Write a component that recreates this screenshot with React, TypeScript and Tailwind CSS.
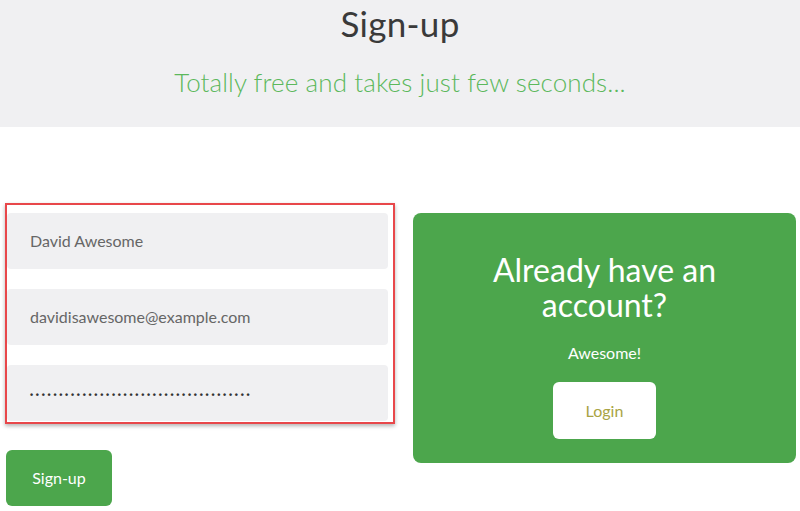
import React from "react";

const dots = "••••••••••••••••••••••••••••••••••••••";

export default function App() {
  return (
    <div className="w-[800px] h-[511px] bg-white overflow-hidden" style={{ fontFamily: "Lato, 'Open Sans', sans-serif" }}>
      <header className="h-[127px] bg-[#f0f0f2] flex flex-col items-center">
        <h1 className="text-[35px] leading-[46px] text-[#3a3a3a] font-normal tracking-[0.3px]">Sign-up</h1>
        <p className="mt-[21px] text-[26px] leading-[30px] text-[#5cb85c] font-light tracking-[0.1px]">Totally free and takes just few seconds...</p>
      </header>
      <div className="flex pl-[5px] pt-[76px] gap-[18px]">
        <div className="flex flex-col w-[390px]">
          <div className="border-2 border-[#e8474a] shadow-[0_2px_4px_rgba(0,0,0,0.3)] pt-[8px] pr-[5px] pb-px flex flex-col gap-[20px]">
            <div className="h-[56px] bg-[#f0f0f2] rounded-[4px] flex items-center pl-[23px] text-[16px] text-[#666]">David Awesome</div>
            <div className="h-[56px] bg-[#f0f0f2] rounded-[4px] flex items-center pl-[23px] text-[16px] text-[#666]">davidisawesome@example.com</div>
            <div className="h-[56px] bg-[#f0f0f2] rounded-[4px] flex items-center pl-[23px] pt-[6px] text-[9px] tracking-[2.7px] text-[#333] font-bold" style={{ fontFamily: "'Liberation Sans', sans-serif" }}>{dots}</div>
          </div>
          <button className="mt-[26px] ml-px w-[106px] h-[56px] bg-[#4ca64c] rounded-[6px] text-white text-[16px]">Sign-up</button>
        </div>
        <div className="mt-[10px] w-[383px] h-[250px] bg-[#4ca64c] rounded-[8px] flex flex-col items-center text-white">
          <h2 className="mt-[39px] text-[32px] leading-[35px] text-center font-normal w-[280px]">Already have an account?</h2>
          <p className="mt-[21px] text-[16px] leading-[20px]">Awesome!</p>
          <button className="mt-[19px] w-[103px] h-[57px] bg-white rounded-[6px] text-[16px] text-[#a9a444]">Login</button>
        </div>
      </div>
    </div>
  );
}
